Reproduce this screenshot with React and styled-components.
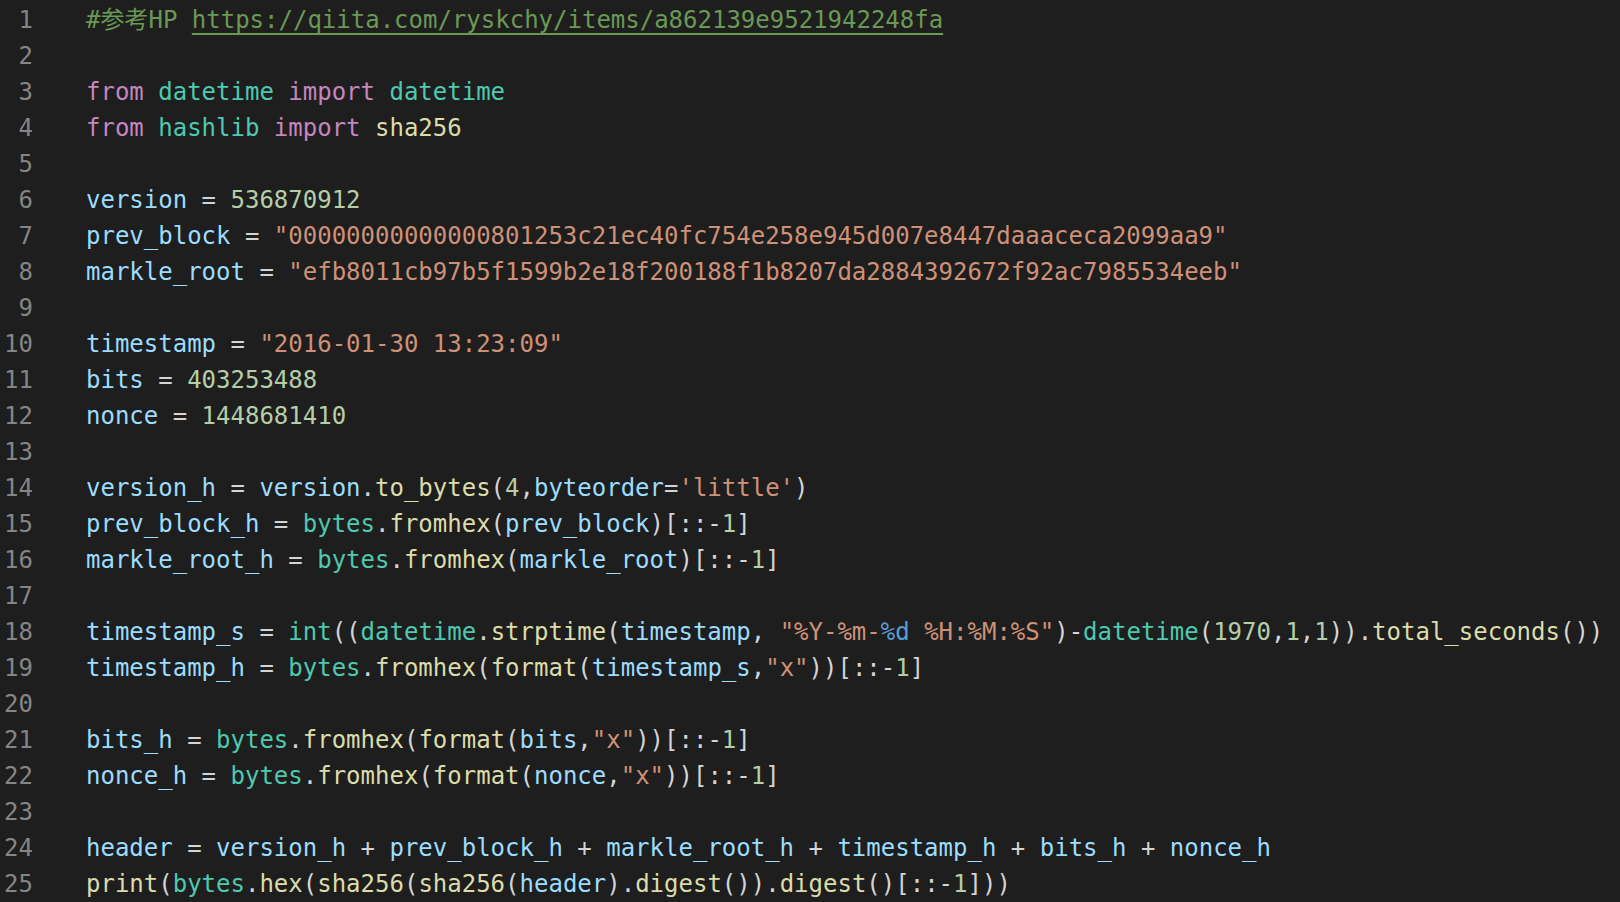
import React from "react";
import styled, { createGlobalStyle } from "styled-components";

const GlobalStyle = createGlobalStyle`
  html, body {
    margin: 0;
    padding: 0;
    background: #1e1e1e;
  }
`;

const colors = {
  kw: "#c586c0",
  mod: "#4ec9b0",
  var: "#9cdcfe",
  num: "#b5cea8",
  str: "#ce9178",
  fn: "#dcdcaa",
  op: "#d4d4d4",
  cm: "#6a9955",
  fmt: "#569cd6",
};

const Editor = styled.div`
  display: flex;
  flex-direction: column;
  width: 1620px;
  height: 902px;
  padding-top: 2px;
  box-sizing: border-box;
  overflow: hidden;
  background: #1e1e1e;
  font-family: "DejaVu Sans Mono", "Noto Sans CJK JP", monospace;
  font-size: 24px;
  line-height: 36px;
`;

const Line = styled.div`
  display: grid;
  grid-template-columns: 33px 1fr;
  column-gap: 53px;
  height: 36px;
  white-space: pre;
`;

const LineNo = styled.span`
  text-align: right;
  color: #858585;
`;

const Tok = styled.span`
  color: ${(p) => colors[p.kind] || colors.op};
  text-decoration: ${(p) => (p.link ? "underline" : "none")};
  text-underline-offset: 5px;
  text-decoration-thickness: 2px;
`;

const op = (t) => ["op", t];
const v = (t) => ["var", t];
const n = (t) => ["num", t];
const s = (t) => ["str", t];
const f = (t) => ["fn", t];
const m = (t) => ["mod", t];
const k = (t) => ["kw", t];
const rev = [op("[::-"), n("1"), op("]")];

const lines = [
  [["cm", "#参考HP "], ["link", "https://qiita.com/ryskchy/items/a862139e9521942248fa"]],
  [],
  [k("from"), op(" "), m("datetime"), op(" "), k("import"), op(" "), m("datetime")],
  [k("from"), op(" "), m("hashlib"), op(" "), k("import"), op(" "), f("sha256")],
  [],
  [v("version"), op(" = "), n("536870912")],
  [v("prev_block"), op(" = "), s('"00000000000000801253c21ec40fc754e258e945d007e8447daaaceca2099aa9"')],
  [v("markle_root"), op(" = "), s('"efb8011cb97b5f1599b2e18f200188f1b8207da2884392672f92ac7985534eeb"')],
  [],
  [v("timestamp"), op(" = "), s('"2016-01-30 13:23:09"')],
  [v("bits"), op(" = "), n("403253488")],
  [v("nonce"), op(" = "), n("1448681410")],
  [],
  [v("version_h"), op(" = "), v("version"), op("."), f("to_bytes"), op("("), n("4"), op(","), v("byteorder"), op("="), s("'little'"), op(")")],
  [v("prev_block_h"), op(" = "), m("bytes"), op("."), f("fromhex"), op("("), v("prev_block"), op(")"), ...rev],
  [v("markle_root_h"), op(" = "), m("bytes"), op("."), f("fromhex"), op("("), v("markle_root"), op(")"), ...rev],
  [],
  [
    v("timestamp_s"), op(" = "), m("int"), op("(("), m("datetime"), op("."), f("strptime"), op("("),
    v("timestamp"), op(", "), s('"%Y-%m-'), ["fmt", "%d"], s(' %H:%M:%S"'), op(")-"), m("datetime"),
    op("("), n("1970"), op(","), n("1"), op(","), n("1"), op("))."), f("total_seconds"), op("())"),
  ],
  [v("timestamp_h"), op(" = "), m("bytes"), op("."), f("fromhex"), op("("), f("format"), op("("), v("timestamp_s"), op(","), s('"x"'), op("))"), ...rev],
  [],
  [v("bits_h"), op(" = "), m("bytes"), op("."), f("fromhex"), op("("), f("format"), op("("), v("bits"), op(","), s('"x"'), op("))"), ...rev],
  [v("nonce_h"), op(" = "), m("bytes"), op("."), f("fromhex"), op("("), f("format"), op("("), v("nonce"), op(","), s('"x"'), op("))"), ...rev],
  [],
  [
    v("header"), op(" = "), v("version_h"), op(" + "), v("prev_block_h"), op(" + "), v("markle_root_h"),
    op(" + "), v("timestamp_h"), op(" + "), v("bits_h"), op(" + "), v("nonce_h"),
  ],
  [
    f("print"), op("("), m("bytes"), op("."), f("hex"), op("("), f("sha256"), op("("), f("sha256"), op("("),
    v("header"), op(")."), f("digest"), op("())."), f("digest"), op("()"), op("[::-"), n("1"), op("]))"),
  ],
];

export default function App() {
  return (
    <>
      <GlobalStyle />
      <Editor>
        {lines.map((toks, i) => (
          <Line key={i}>
            <LineNo>{i + 1}</LineNo>
            <span>
              {toks.map(([kind, text], j) =>
                kind === "link" ? (
                  <Tok key={j} kind="cm" link>
                    {text}
                  </Tok>
                ) : (
                  <Tok key={j} kind={kind}>
                    {text}
                  </Tok>
                )
              )}
            </span>
          </Line>
        ))}
      </Editor>
    </>
  );
}
